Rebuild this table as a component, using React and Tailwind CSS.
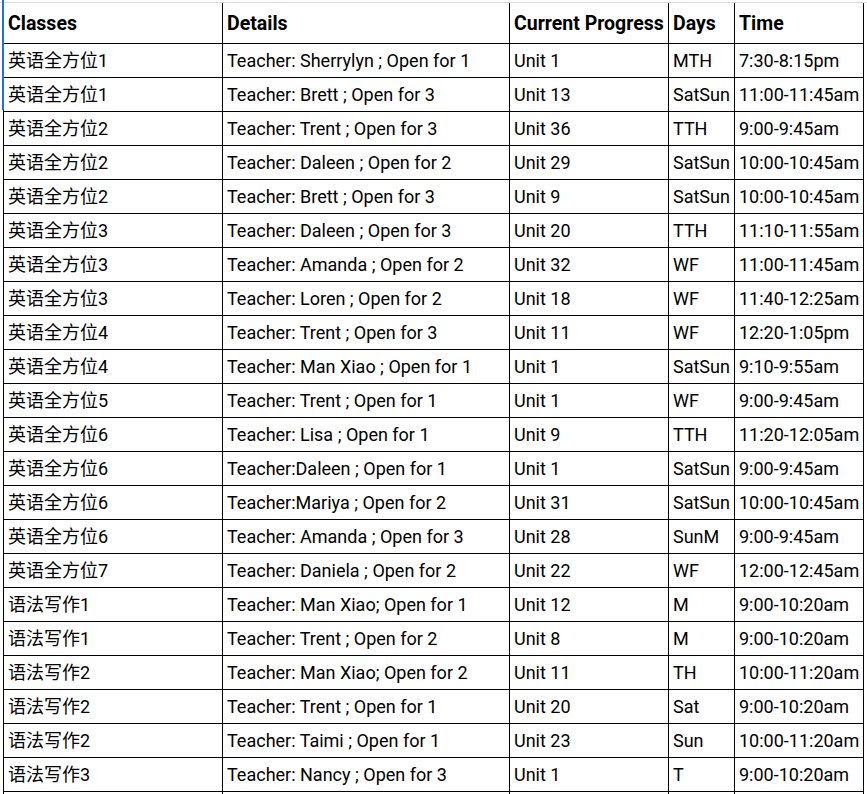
import React from 'react'

const rows = [
  ['英语全方位1', 'Teacher: Sherrylyn ; Open for 1', 'Unit 1', 'MTH', '7:30-8:15pm'],
  ['英语全方位1', 'Teacher: Brett ; Open for 3', 'Unit 13', 'SatSun', '11:00-11:45am'],
  ['英语全方位2', 'Teacher: Trent ; Open for 3', 'Unit 36', 'TTH', '9:00-9:45am'],
  ['英语全方位2', 'Teacher: Daleen ; Open for 2', 'Unit 29', 'SatSun', '10:00-10:45am'],
  ['英语全方位2', 'Teacher: Brett ; Open for 3', 'Unit 9', 'SatSun', '10:00-10:45am'],
  ['英语全方位3', 'Teacher: Daleen ; Open for 3', 'Unit 20', 'TTH', '11:10-11:55am'],
  ['英语全方位3', 'Teacher: Amanda ; Open for 2', 'Unit 32', 'WF', '11:00-11:45am'],
  ['英语全方位3', 'Teacher: Loren ; Open for 2', 'Unit 18', 'WF', '11:40-12:25am'],
  ['英语全方位4', 'Teacher: Trent ; Open for 3', 'Unit 11', 'WF', '12:20-1:05pm'],
  ['英语全方位4', 'Teacher: Man Xiao ; Open for 1', 'Unit 1', 'SatSun', '9:10-9:55am'],
  ['英语全方位5', 'Teacher: Trent ; Open for 1', 'Unit 1', 'WF', '9:00-9:45am'],
  ['英语全方位6', 'Teacher: Lisa ; Open for 1', 'Unit 9', 'TTH', '11:20-12:05am'],
  ['英语全方位6', 'Teacher:Daleen ; Open for 1', 'Unit 1', 'SatSun', '9:00-9:45am'],
  ['英语全方位6', 'Teacher:Mariya ; Open for 2', 'Unit 31', 'SatSun', '10:00-10:45am'],
  ['英语全方位6', 'Teacher: Amanda ; Open for 3', 'Unit 28', 'SunM', '9:00-9:45am'],
  ['英语全方位7', 'Teacher: Daniela ; Open for 2', 'Unit 22', 'WF', '12:00-12:45am'],
  ['语法写作1', 'Teacher: Man Xiao; Open for 1', 'Unit 12', 'M', '9:00-10:20am'],
  ['语法写作1', 'Teacher: Trent ; Open for 2', 'Unit 8', 'M', '9:00-10:20am'],
  ['语法写作2', 'Teacher: Man Xiao; Open for 2', 'Unit 11', 'TH', '10:00-11:20am'],
  ['语法写作2', 'Teacher: Trent ; Open for 1', 'Unit 20', 'Sat', '9:00-10:20am'],
  ['语法写作2', 'Teacher: Taimi ; Open for 1', 'Unit 23', 'Sun', '10:00-11:20am'],
  ['语法写作3', 'Teacher: Nancy ; Open for 3', 'Unit 1', 'T', '9:00-10:20am'],
  ['', '', '', '', ''],
]

const headers = ['Classes', 'Details', 'Current Progress', 'Days', 'Time']

export default function App() {
  return (
    <div
      className="relative h-[794px] overflow-hidden bg-white text-black text-[18px]"
      style={{ fontFamily: 'Roboto, "Noto Sans CJK SC", sans-serif' }}
    >
      {/* selection marker on the left edge */}
      <div className="absolute left-[2px] top-0 h-[110px] w-[2px] bg-[#1a73e8]" />

      <div className="pt-[2px]">
        <div className="border-t border-[#d9d9d9] pl-[3px]">
          <div className="grid grid-cols-[219px_287px_159px_66px_129px] w-max border-l border-black">
            {headers.map((h) => (
              <div
                key={h}
                className="h-[41px] flex items-center px-[4px] pt-[2px] border-r border-b border-black font-bold text-[19.5px] whitespace-nowrap overflow-hidden"
              >
                {h}
              </div>
            ))}
            {rows.map((row, i) =>
              row.map((cell, j) => (
                <div
                  key={`${i}-${j}`}
                  className="h-[34px] flex items-center px-[4px] border-r border-b border-black whitespace-nowrap"
                >
                  {cell}
                </div>
              ))
            )}
          </div>
        </div>
      </div>
    </div>
  )
}
